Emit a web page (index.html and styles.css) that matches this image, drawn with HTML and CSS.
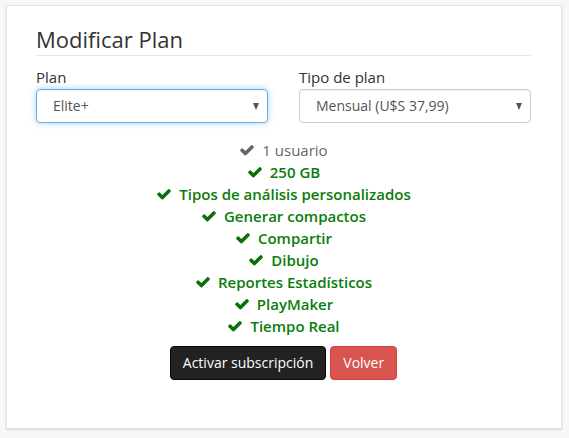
FILE: index.html
```html
<!DOCTYPE html>
<html lang="es">
<head>
<meta charset="utf-8">
<title>Modificar Plan</title>
<link rel="stylesheet" href="styles.css">
</head>
<body>
<div class="page">
  <div class="card">
    <h1 class="title">Modificar Plan</h1>
    <div class="row">
      <div class="field">
        <label class="label">Plan</label>
        <div class="select focused"><span>Elite+</span><span class="arrow"></span></div>
      </div>
      <div class="field">
        <label class="label">Tipo de plan</label>
        <div class="select"><span>Mensual (U$S 37,99)</span><span class="arrow"></span></div>
      </div>
    </div>
    <ul class="features">
      <li class="muted"><svg class="check" viewBox="0 0 1792 1792"><path d="M1671 566q0 40-28 68l-724 724-136 136q-28 28-68 28t-68-28l-136-136-362-362q-28-28-28-68t28-68l136-136q28-28 68-28t68 28l294 295 656-657q28-28 68-28t68 28l136 136q28 28 28 68z"/></svg>1 usuario</li>
      <li><svg class="check" viewBox="0 0 1792 1792"><path d="M1671 566q0 40-28 68l-724 724-136 136q-28 28-68 28t-68-28l-136-136-362-362q-28-28-28-68t28-68l136-136q28-28 68-28t68 28l294 295 656-657q28-28 68-28t68 28l136 136q28 28 28 68z"/></svg>250 GB</li>
      <li><svg class="check" viewBox="0 0 1792 1792"><path d="M1671 566q0 40-28 68l-724 724-136 136q-28 28-68 28t-68-28l-136-136-362-362q-28-28-28-68t28-68l136-136q28-28 68-28t68 28l294 295 656-657q28-28 68-28t68 28l136 136q28 28 28 68z"/></svg>Tipos de análisis personalizados</li>
      <li><svg class="check" viewBox="0 0 1792 1792"><path d="M1671 566q0 40-28 68l-724 724-136 136q-28 28-68 28t-68-28l-136-136-362-362q-28-28-28-68t28-68l136-136q28-28 68-28t68 28l294 295 656-657q28-28 68-28t68 28l136 136q28 28 28 68z"/></svg>Generar compactos</li>
      <li><svg class="check" viewBox="0 0 1792 1792"><path d="M1671 566q0 40-28 68l-724 724-136 136q-28 28-68 28t-68-28l-136-136-362-362q-28-28-28-68t28-68l136-136q28-28 68-28t68 28l294 295 656-657q28-28 68-28t68 28l136 136q28 28 28 68z"/></svg>Compartir</li>
      <li><svg class="check" viewBox="0 0 1792 1792"><path d="M1671 566q0 40-28 68l-724 724-136 136q-28 28-68 28t-68-28l-136-136-362-362q-28-28-28-68t28-68l136-136q28-28 68-28t68 28l294 295 656-657q28-28 68-28t68 28l136 136q28 28 28 68z"/></svg>Dibujo</li>
      <li><svg class="check" viewBox="0 0 1792 1792"><path d="M1671 566q0 40-28 68l-724 724-136 136q-28 28-68 28t-68-28l-136-136-362-362q-28-28-28-68t28-68l136-136q28-28 68-28t68 28l294 295 656-657q28-28 68-28t68 28l136 136q28 28 28 68z"/></svg>Reportes Estadísticos</li>
      <li><svg class="check" viewBox="0 0 1792 1792"><path d="M1671 566q0 40-28 68l-724 724-136 136q-28 28-68 28t-68-28l-136-136-362-362q-28-28-28-68t28-68l136-136q28-28 68-28t68 28l294 295 656-657q28-28 68-28t68 28l136 136q28 28 28 68z"/></svg>PlayMaker</li>
      <li><svg class="check" viewBox="0 0 1792 1792"><path d="M1671 566q0 40-28 68l-724 724-136 136q-28 28-68 28t-68-28l-136-136-362-362q-28-28-28-68t28-68l136-136q28-28 68-28t68 28l294 295 656-657q28-28 68-28t68 28l136 136q28 28 28 68z"/></svg>Tiempo Real</li>
    </ul>
    <div class="actions">
      <button class="btn btn-dark">Activar subscripción</button>
      <button class="btn btn-red">Volver</button>
    </div>
  </div>
</div>
</body>
</html>
```

FILE: styles.css
```css
* { box-sizing: border-box; }
html, body { margin: 0; padding: 0; }
body {
  background: #f7f7f7;
  font-family: "Open Sans", "DejaVu Sans", sans-serif;
  color: #333;
  width: 569px;
  height: 438px;
  overflow: hidden;
}
.page {
  padding: 5px 7px 8px 6px;
}
.card {
  background: #fff;
  border: 1px solid #e2e2e2;
  box-shadow: 0 1px 2px rgba(0, 0, 0, 0.12);
  padding: 20px 30px 48px 29px;
}
.title {
  font-size: 22px;
  line-height: 26px;
  font-weight: 400;
  color: #333;
  margin: 0;
  padding-bottom: 3px;
  border-bottom: 1px solid #e5e5e5;
}
.row {
  display: flex;
  gap: 31px;
  margin-top: 11px;
}
.field {
  flex: 1;
  display: flex;
  flex-direction: column;
}
.label {
  font-size: 15px;
  line-height: 20px;
  margin-bottom: 2px;
  color: #333;
}
.select {
  height: 34px;
  border: 1px solid #ccc;
  border-radius: 4px;
  display: flex;
  align-items: center;
  justify-content: space-between;
  padding: 0 8px 0 16px;
  font-size: 14px;
  line-height: 20px;
  color: #555;
  box-shadow: inset 0 1px 1px rgba(0, 0, 0, 0.075);
}
.select.focused {
  border-color: #66afe9;
  box-shadow: inset 0 1px 1px rgba(0, 0, 0, 0.075), 0 0 6px rgba(102, 175, 233, 0.6);
}
.arrow {
  width: 0;
  height: 0;
  border-left: 3.5px solid transparent;
  border-right: 3.5px solid transparent;
  border-top: 7px solid #555;
  margin-top: 1px;
}
.features {
  list-style: none;
  margin: 16px 0 0;
  padding: 0;
  text-align: center;
}
.features li {
  font-size: 15px;
  line-height: 22px;
  font-weight: 600;
  color: #0a7d0a;
}
.features li.muted {
  color: #666;
  font-weight: 400;
}
.check {
  width: 16px;
  height: 16px;
  fill: #0b6e0b;
  vertical-align: -2px;
  margin-right: 7px;
}
.muted .check {
  fill: #666;
}
.actions {
  display: flex;
  justify-content: center;
  gap: 4px;
  margin-top: 9px;
}
.btn {
  font-family: "Open Sans", "DejaVu Sans", sans-serif;
  font-size: 14px;
  line-height: 20px;
  height: 34px;
  padding: 6px 12px;
  border-radius: 4px;
  color: #fff;
  border: 1px solid transparent;
}
.btn-dark {
  background: #222;
  border-color: #080808;
}
.btn-red {
  background: #d9534f;
  border-color: #d43f3a;
}
```
